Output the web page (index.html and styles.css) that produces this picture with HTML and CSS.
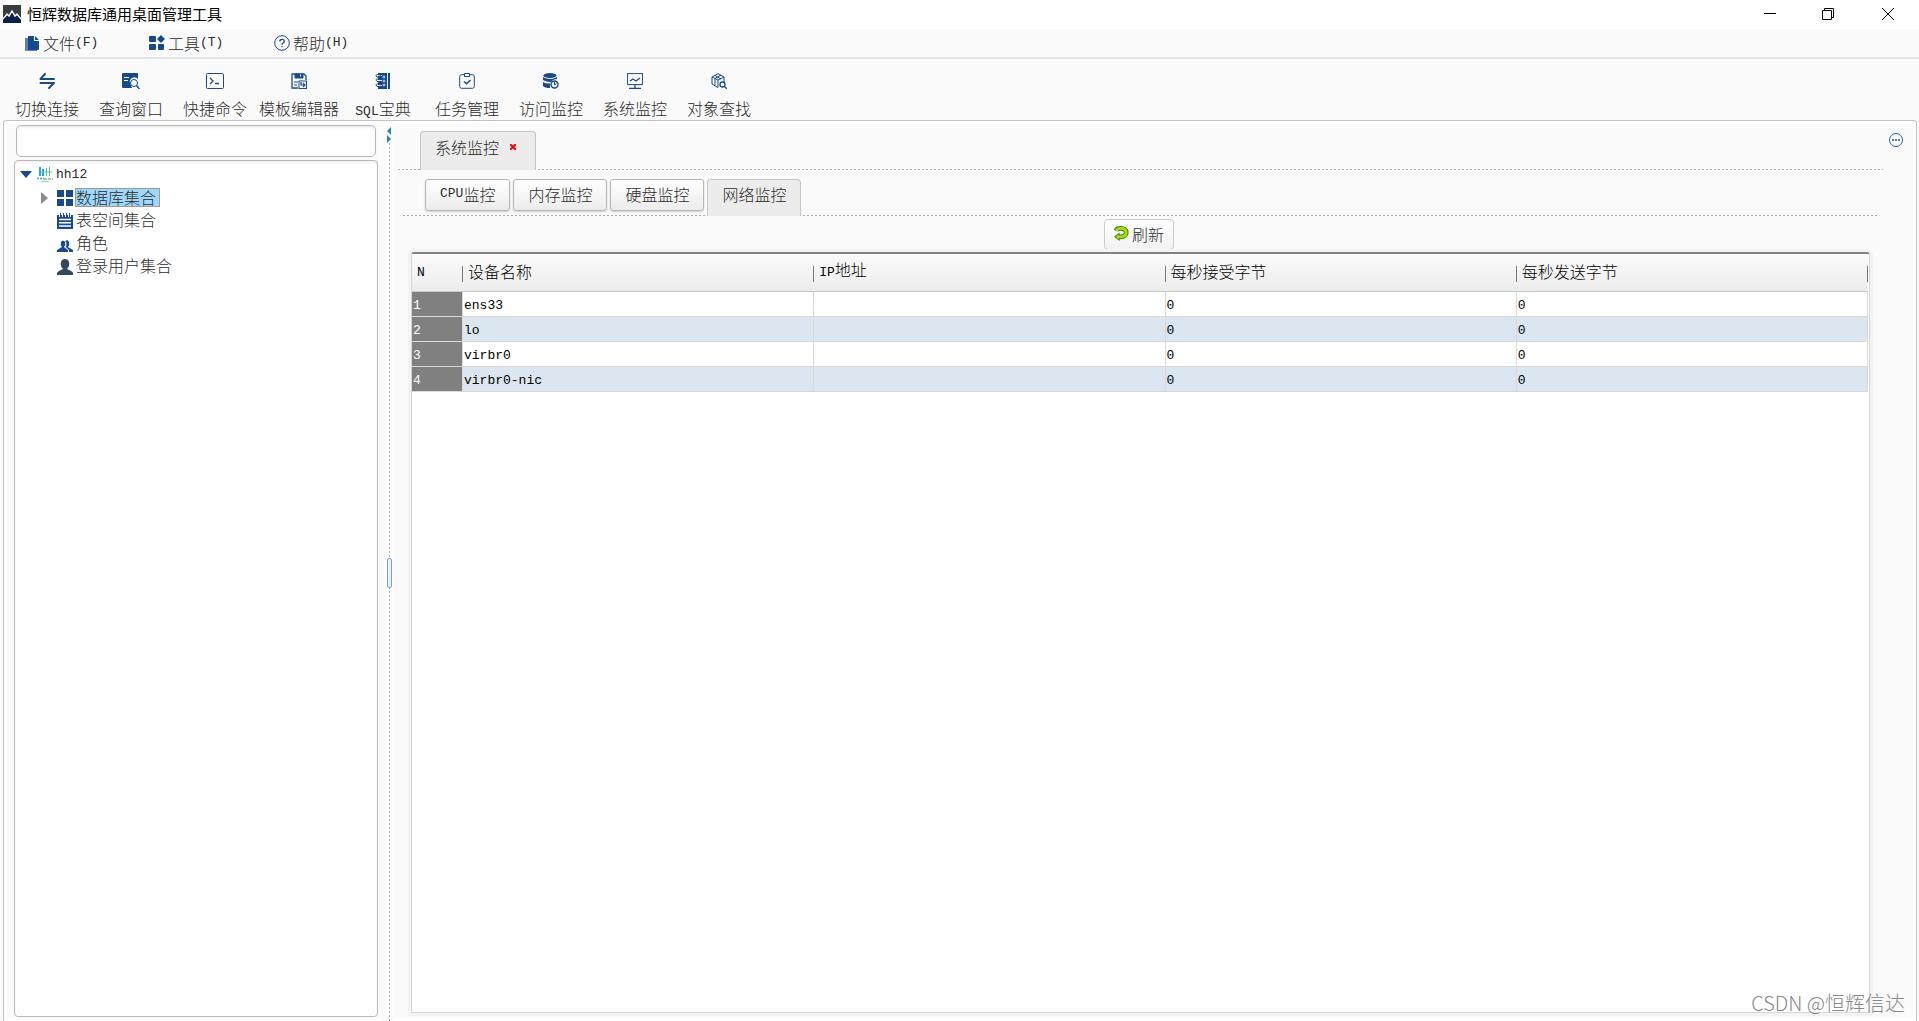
FILE: index.html
```html
<!DOCTYPE html>
<html lang="zh-CN">
<head>
<meta charset="utf-8">
<title>恒辉数据库通用桌面管理工具</title>
<link rel="stylesheet" href="styles.css">
</head>
<body>
<header class="titlebar">
  <svg class="logo" viewBox="0 0 18 18"><path fill="#3a3b3d" d="M0 0h18v18H0z"/><path fill="#0b2348" d="M0 14l4-4 2 1 3-5 4 5 2-1 3 4v4H0z"/><path fill="none" stroke="#fff" stroke-width="1.4" d="M0 14l4-5 2 2 3-5 3 5 2-2 4 5"/></svg>
  <h1>恒辉数据库通用桌面管理工具</h1>
  <div class="window-controls">
    <button aria-label="最小化"><svg viewBox="0 0 12 12"><path d="M0 5.500h12"/></svg></button>
    <button aria-label="还原"><svg viewBox="0 0 12 12"><path d="M.5 2.500h9v9h-9zM2.500 2.500v-2h9v9h-2"/></svg></button>
    <button aria-label="关闭"><svg viewBox="0 0 12 12"><path d="M0 0l12 12M12 0L0 12"/></svg></button>
  </div>
</header>
<nav class="menubar">
  <button><svg class="icon" viewBox="0 0 16 16"><path fill="#5f7fae" d="M1 3h4v12h8v1H2q-1 0-1-1z"/><path fill="#174a8b" d="M4 1h6v5h5v8q0 1-1 1H5q-1 0-1-1zM11 1l4 4h-4z"/></svg>文件<span class="latin">(F)</span></button>
  <button><svg class="icon" viewBox="0 0 16 16" fill="#174a8b"><rect x="0" y="1" width="7" height="6" rx="1"/><rect x="0" y="9" width="7" height="6" rx="1"/><rect x="9" y="9" width="6" height="6" rx="1"/><path d="M12 0l4 4-4 4-4-4z"/></svg>工具<span class="latin">(T)</span></button>
  <button><svg class="icon" viewBox="0 0 16 16" fill="none" stroke="#174a8b"><circle cx="8" cy="8" r="7.300"/><path stroke-width="1.300" d="M5.800 6.500q0-2.200 2.200-2.200t2.200 2q0 1.200-1.200 1.700Q8 8.500 8 9.700M8 11v1.300"/></svg>帮助<span class="latin">(H)</span></button>
</nav>
<div class="toolbar">
  <button><svg class="icon" viewBox="0 0 16 16" fill="none" stroke="#174a8b" stroke-width="2" stroke-linecap="round" stroke-linejoin="round"><path d="M6 1L1.500 6H15M1.500 10H15l-5 5"/></svg>切换连接</button>
  <button><svg class="icon wide" viewBox="0 0 18 16"><path fill="#174a8b" d="M1 0h14q1 0 1 1v5q-3-3-6-1t-2 5l2 5H1q-1 0-1-1V1q0-1 1-1z"/><path stroke="#fff" d="M2 4.500h5M2 7.500h4"/><circle cx="12" cy="10" r="3.500" fill="#fff" stroke="#174a8b"/><path stroke="#174a8b" stroke-width="1.500" d="M14.500 12.500L17.500 16"/></svg>查询窗口</button>
  <button><svg class="icon wide" viewBox="0 0 18 16" fill="none" stroke="#174a8b"><rect x=".5" y=".5" width="17" height="15" rx="1" fill="#fff"/><path stroke-width="1.300" d="M4 5l3 3-3 3M9 10.500h4"/></svg>快捷命令</button>
  <button><svg class="icon" viewBox="0 0 16 16" fill="none" stroke="#174a8b"><path stroke-width="1.300" d="M7 15H1V1h12l2 2v4"/><path fill="#174a8b" d="M4 1h8v4H4z"/><path stroke="#fff" d="M9.500 1.500v2"/><path d="M3 9h4M3 12h3"/><rect x="8" y="8" width="7.500" height="7.500"/><path stroke-width="1.200" d="M10 9v3h4M12 10l2 2-2 2"/></svg>模板编辑器</button>
  <button><svg class="icon" viewBox="0 0 16 16"><path fill="#174a8b" d="M3 0h9v16H3zM13 0h2v16h-2z"/><path fill="none" stroke="#fafafa" d="M3 2.500h4M3 7.500h4M3 12.500h4"/><path fill="none" stroke="#174a8b" d="M6 2.500q-5-2-5 0t4 2M6 7q-5-2-5 0t4 2M6 12q-5-2-5 0t4 2"/><g fill="none" stroke="#c7d5e7"><circle cx="9" cy="4" r="1"/><circle cx="9" cy="8" r="1"/><circle cx="9" cy="12" r="1"/></g></svg><span><span class="latin">SQL</span>宝典</span></button>
  <button><svg class="icon" viewBox="0 0 16 16" fill="none" stroke="#174a8b"><rect x=".7" y="1.700" width="14.600" height="13.600" rx="2"/><path fill="#fff" d="M5.500.5h5v3h-5z"/><path stroke-width="1.500" d="M5 8.500l2.500 2.300L11.500 7"/></svg>任务管理</button>
  <button><svg class="icon" viewBox="0 0 16 16" fill="#174a8b"><ellipse cx="7" cy="2.500" rx="6.500" ry="2.500"/><path d="M0 4q7 4 14 0v2q-4 0-6 3-5 0-8-2zM0 9q3 2 7 1.500v4.500Q2 15 0 13z"/><circle cx="11.500" cy="11.500" r="3.500" fill="#fff" stroke="#174a8b" stroke-width="1.400"/><path fill="none" stroke="#174a8b" d="M11.500 9v3l2-1.500"/></svg>访问监控</button>
  <button><svg class="icon" viewBox="0 0 16 16" fill="none" stroke="#174a8b"><rect x=".6" y=".6" width="14.800" height="11" fill="#fff"/><path stroke-width="1.300" d="M3 8l3-2 3 2 4-3M8 12v3M2 15.300h12"/></svg>系统监控</button>
  <button><svg class="icon" viewBox="0 0 16 16" fill="none" stroke="#174a8b"><path d="M7 .6L13 4v5M7 .6L1 4v7l6 3.500V7L1 4M7 7l6-3M4 2.500L10 6M10 2L4 5.500v7"/><circle cx="11.500" cy="11.500" r="2.500" fill="#fff" stroke-width="1.300"/><path stroke-width="1.300" d="M13.300 13.300l2.500 2.500"/></svg>对象查找</button>
</div>
<main class="workspace">
  <aside class="sidebar">
    <input class="search" type="text" aria-label="搜索">
    <ul class="tree">
      <li class="root"><svg class="arrow open" viewBox="0 0 12 7"><path fill="#174a8b" d="M0 0h12L6 7z"/></svg><svg class="icon" viewBox="0 0 16 16" fill="none"><path stroke="#19aee0" stroke-width="2" d="M3 0v9M6 2v7"/><path stroke="#67b8a0" d="M3 5h12M9.500 1v8M12.500 0v9"/><path stroke="#2fb3d8" stroke-width="1.500" stroke-dasharray="2 1" d="M0 11.500h7"/><path stroke="#7cc576" stroke-width="1.500" stroke-dasharray="3 1" d="M7 12h9"/><path stroke="#8fd2e8" d="M4 14.500h8"/></svg><span class="latin">hh12</span></li>
      <li><svg class="arrow" viewBox="0 0 7 12"><path fill="#8c8c8c" d="M0 0l7 6-7 6z"/></svg><svg class="icon" viewBox="0 0 16 16" fill="#174a8b"><path d="M0 0h7v7H0zM9 0h7v7H9zM0 9h7v7H0zM9 9h7v7H9z"/></svg><span class="label selected">数据库集合</span></li>
      <li><span class="arrow"></span><svg class="icon" viewBox="0 0 16 16"><path fill="#174a8b" d="M0 2h16v14H0z"/><path stroke="#fff" d="M2.500 1v3M5.500 1v3M8.500 1v3M11.500 1v3M13.500 1v3"/><path stroke="#174a8b" d="M3.500 0v3M6.500 0v3M9.500 0v3M12.500 0v3"/><path stroke="#fff" stroke-width="1.500" d="M2 6.500h12M2 9.800h12M2 13h12"/></svg><span class="label">表空间集合</span></li>
      <li><span class="arrow"></span><svg class="icon" viewBox="0 0 16 16" fill="#174a8b"><path d="M0 16v-2l5-3q-2-2-1-5 2-3 4 0 1 3-1 5l4 3v2z"/><path d="M8 5q3-2 4 1 1 3-1 5l5 3v2h-4v-2l-3-3q1-3 0-5z"/></svg><span class="label">角色</span></li>
      <li><span class="arrow"></span><svg class="icon" viewBox="0 0 16 16" fill="#33475e"><path d="M0 16v-2q1-2 6-4-3-3-2-7 1-3 4-3t4 3q1 4-2 7 5 2 6 4v2z"/></svg><span class="label">登录用户集合</span></li>
    </ul>
  </aside>
  <div class="splitter"><svg viewBox="0 0 4 16" fill="#2f82ab"><path d="M4 0v8L0 4zM0 8v8l4-4z"/></svg><i class="grip"></i></div>
  <section class="content">
    <div class="tabs outer">
      <button class="tab active">系统监控<svg viewBox="0 0 6 6"><path stroke="#f00" stroke-width="2" d="M0 0l6 6M6 0L0 6"/></svg></button>
    </div>
    <div class="tabs inner">
      <button class="tab"><span class="latin">CPU</span>监控</button>
      <button class="tab">内存监控</button>
      <button class="tab">硬盘监控</button>
      <button class="tab active">网络监控</button>
    </div>
    <div class="actions"><button class="refresh"><svg viewBox="0 0 16 16" fill="none"><path stroke="#458500" stroke-width="5" d="M2 5q1-2.500 5-2.500 6 0 6 4.500t-6 4.500H5"/><path fill="#458500" d="M6 7v9L0 11.500z"/><path stroke="#a5dc1a" stroke-width="3" d="M2.500 5q1-2.500 5-2.500 5.500 0 5.500 4.500t-6 4.500H4"/><path fill="#a5dc1a" d="M5 9v5l-3.500-2.500z"/></svg>刷新</button></div>
    <div class="grid">
      <table>
        <colgroup><col class="number"><col><col><col><col></colgroup>
        <thead><tr><th><span class="latin">N</span></th><th>设备名称</th><th><span class="latin">IP</span>地址</th><th>每秒接受字节</th><th>每秒发送字节</th></tr></thead>
        <tbody>
          <tr><td>1</td><td>ens33</td><td></td><td>0</td><td>0</td></tr>
          <tr><td>2</td><td>lo</td><td></td><td>0</td><td>0</td></tr>
          <tr><td>3</td><td>virbr0</td><td></td><td>0</td><td>0</td></tr>
          <tr><td>4</td><td>virbr0-nic</td><td></td><td>0</td><td>0</td></tr>
        </tbody>
      </table>
    </div>
  </section>
  <aside class="rail"><button aria-label="更多"><svg viewBox="0 0 14 14"><circle cx="7" cy="7" r="6.500" fill="none" stroke="#2a61a0"/><path fill="#5580b3" d="M3 6h2v2H3zM6 6h2v2H6zM9 6h2v2H9z"/></svg></button></aside>
</main>
<div class="watermark">CSDN @恒辉信达</div>
</body>
</html>
```
FILE: styles.css
```css
* {
  box-sizing: border-box;
}

body {
  display: flex;
  flex-direction: column;
  height: 100vh;
  margin: 0;
  overflow: hidden;
  background: #fafafa;
  color: #2c2c2c;
  font: 300 16px/20px "Noto Sans CJK SC", sans-serif;
}

button {
  margin: 0;
  padding: 0;
  border: 0;
  background: none;
  color: inherit;
  font: inherit;
}

svg {
  display: block;
  flex: none;
}

.latin {
  font-family: "Liberation Mono", monospace;
  font-size: 13px;
}

.icon {
  width: 16px;
  height: 16px;
}

.icon.wide {
  width: 18px;
}

/* Window title */
.titlebar {
  display: flex;
  flex: none;
  align-items: center;
  height: 29px;
  padding: 0 0 2px 3px;
  background: #fff;
}

.logo {
  width: 18px;
  height: 18px;
}

.titlebar h1 {
  flex: 1;
  margin: 0 0 0 6px;
  color: #000;
  font-size: 15px;
  font-weight: 400;
}

.window-controls {
  display: flex;
}

.window-controls button {
  display: grid;
  place-items: center;
  width: 58px;
  height: 26px;
}

.window-controls button:last-child {
  width: 62px;
}

.window-controls svg {
  width: 12px;
  height: 12px;
  fill: none;
  stroke: #000;
}

/* Menus and tools */
.menubar {
  display: flex;
  flex: none;
  height: 30px;
  padding-left: 24px;
  border-bottom: 2px solid #e1e5e9;
}

.menubar button {
  display: flex;
  align-items: center;
  width: 125px;
}

.menubar .icon {
  margin-right: 3px;
}

.toolbar {
  display: flex;
  flex: none;
  height: 61px;
  padding-left: 5px;
}

.toolbar button {
  display: flex;
  flex-direction: column;
  align-items: center;
  gap: 9px;
  width: 84px;
  padding-top: 14px;
}

/* Work area */
.workspace {
  display: flex;
  flex: 1;
  min-height: 0;
  margin: 0 2px 0 3px;
  border: 1px solid #c3c3c3;
  border-bottom: 0;
  border-radius: 4px 4px 0 0;
  box-shadow: inset 0 0 0 3px #fff;
}

.sidebar {
  display: flex;
  flex: none;
  flex-direction: column;
  width: 374px;
  padding: 4px 0 4px 10px;
}

.search {
  height: 32px;
  margin: 0 2px 3px;
  padding: 0 8px;
  border: 1px solid #b7b7b7;
  border-radius: 5px;
  background: #fff;
  box-shadow: inset 0 2px 2px #eee;
  font: inherit;
}

.tree {
  flex: 1;
  margin: 0;
  padding: 2px 5px;
  border: 1px solid #b9b9b9;
  border-radius: 4px;
  background: #fff;
  box-shadow: inset 0 2px 2px #f3f3f3;
  list-style: none;
}

.tree li {
  display: flex;
  align-items: center;
  height: 23px;
  padding-left: 21px;
}

.tree .root {
  padding-left: 0;
}

.tree .arrow {
  width: 7px;
  height: 12px;
  margin-right: 9px;
}

.tree .arrow.open {
  width: 12px;
  height: 7px;
  margin-right: 5px;
}

.tree .icon {
  margin-right: 3px;
}

.label {
  height: 19px;
  line-height: 16px;
}

.selected {
  margin-left: -1px;
  padding-right: 3px;
  border: 1px solid #999;
  background: #9fd8fb;
}

.splitter {
  display: flex;
  flex: none;
  flex-direction: column;
  align-items: center;
  justify-content: space-between;
  width: 16px;
  padding: 6px 0 433px;
  background: repeating-linear-gradient(#aaa 0 2px, #fff 2px 4px) 11px 22px / 1px 100% no-repeat #fcfcfc;
}

.splitter svg {
  width: 4px;
  height: 16px;
  margin-left: 6px;
}

.grip {
  width: 5px;
  height: 30px;
  margin-left: 7px;
  border: 1px solid #7ba0cb;
  border-radius: 2px;
  background: #e6f1fa;
}

.content {
  display: flex;
  flex: 1;
  flex-direction: column;
  min-width: 0;
  padding: 10px 0 8px 4px;
}

.tabs {
  display: flex;
  flex: none;
  gap: 3px;
  background: repeating-linear-gradient(90deg, #aaa 0 2px, transparent 2px 4px) 0 100% / 100% 1px no-repeat;
}

.outer {
  height: 39px;
  padding-left: 22px;
}

.inner {
  height: 46px;
  margin: 0 6px 0 5px;
  padding: 9px 0 0 22px;
}

.tab {
  display: flex;
  align-items: center;
  height: 32px;
  padding: 0 14px 3px;
  border: 1px solid #b7b7b7;
  border-radius: 3px;
  background: linear-gradient(#fff, #ececec);
  box-shadow: 0 1px 2px #ccc;
}

.tab.active {
  height: 37px;
  padding-bottom: 8px;
  border-color: #c6c6c6;
  border-bottom: 0;
  border-radius: 4px 4px 0 0;
  background: #ececec;
  box-shadow: none;
}

.outer .tab.active {
  height: 39px;
  padding-right: 19px;
}

.tab svg {
  width: 6px;
  height: 6px;
  margin-left: 11px;
}

.actions {
  display: flex;
  flex: none;
  justify-content: center;
  height: 36px;
  padding: 3px 3px 2px 0;
}

.refresh {
  display: flex;
  align-items: center;
  gap: 3px;
  height: 31px;
  padding: 0 9px 2px;
  border: 1px solid #ccc;
  border-radius: 4px;
  background: linear-gradient(#fff, #f2f2f2);
}

.refresh svg {
  width: 15px;
  height: 15px;
}

/* Device table */
.grid {
  flex: 1;
  margin: 0 13px 0 13px;
  border: 1px solid #d6d6d6;
  border-top: 2px solid #828282;
  border-radius: 3px 3px 0 0;
  background: #fff;
  box-shadow: 0 0 0 3px #f3f3f3;
}

table {
  width: 100%;
  padding-right: 1px;
  border-collapse: separate;
  border-spacing: 0;
  table-layout: fixed;
  color: #000;
}

.number {
  width: 51px;
}

th {
  height: 38px;
  padding: 0 5px 4px;
  border-bottom: 1px solid #c8c8c8;
  background: linear-gradient(#777, #777) 100% 12px / 1px 16px no-repeat, linear-gradient(#fbfbfb, #ececec);
  font-weight: 300;
  text-align: left;
}

td {
  height: 25px;
  padding: 3px 1px 0;
  border-right: 1px solid #d9d9d9;
  border-bottom: 1px solid #d9d9d9;
  font: 13px/20px "Liberation Mono", monospace;
}

tbody tr:nth-child(even) {
  background: #dce6f0;
}

td:first-child {
  background: #808080;
  color: #fff;
}

.rail {
  flex: none;
  width: 33px;
  padding: 9px 0 0 6px;
}

.rail svg {
  width: 14px;
  height: 14px;
}

.watermark {
  position: absolute;
  right: 14px;
  bottom: 4px;
  color: #888;
  font-size: 20px;
  line-height: 28px;
}
```
